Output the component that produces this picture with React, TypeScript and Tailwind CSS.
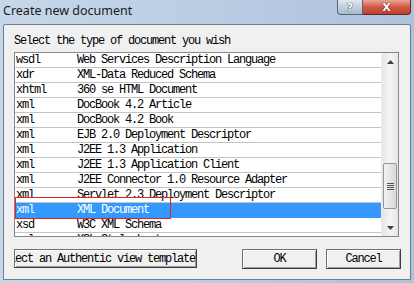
import React from "react";

const rows: [string, string][] = [
  ["wsdl", "Web Services Description Language"],
  ["xdr", "XML-Data Reduced Schema"],
  ["xhtml", "360 se HTML Document"],
  ["xml", "DocBook 4.2 Article"],
  ["xml", "DocBook 4.2 Book"],
  ["xml", "EJB 2.0 Deployment Descriptor"],
  ["xml", "J2EE 1.3 Application"],
  ["xml", "J2EE 1.3 Application Client"],
  ["xml", "J2EE Connector 1.0 Resource Adapter"],
  ["xml", "Servlet 2.3 Deployment Descriptor"],
  ["xml", "XML Document"],
  ["xsd", "W3C XML Schema"],
  ["xsl", "XSL Stylesheet"],
];

const mono = "font-['Liberation_Mono',monospace] text-[12px] tracking-[-1.2px]";

export default function App() {
  return (
    <div className="relative w-[414px] h-[283px] overflow-hidden flex flex-col px-[3px] pb-[3px] bg-gradient-to-r from-[#c6d7ea] to-[#adc3dc]">
      {/* title bar */}
      <div className="h-[24px] flex items-start shrink-0">
        <div className="pt-[2px] font-['Noto_Sans',sans-serif] text-[12.5px] leading-[18px] text-[#1a1a1a]">
          Create new document
        </div>
        <div className="ml-auto flex">
          <div className="w-[26px] h-[15px] border border-t-0 border-[#55657a] rounded-bl-[4px] bg-gradient-to-b from-[#dfe7f0] to-[#a9b9cc] flex items-center justify-center font-['DejaVu_Sans',sans-serif] font-bold text-[11px] leading-none text-white [text-shadow:0_0_1px_#2c3a4a,0_0_1px_#2c3a4a]">
            ?
          </div>
          <div className="w-[48px] h-[15px] border border-t-0 border-l-0 border-[#5a2a24] rounded-br-[4px] bg-gradient-to-b from-[#e9a596] via-[#d15a44] to-[#c1402c] flex items-center justify-center font-['DejaVu_Sans',sans-serif] font-bold text-[11px] leading-none text-white [text-shadow:0_0_1px_#4a1a12,0_0_1px_#4a1a12]">
            X
          </div>
        </div>
      </div>

      {/* content panel */}
      <div className="flex-1 flex flex-col border border-[#6d7d8f] rounded-t-[2px] bg-[#f0f0f0] pl-[10px] pt-[10px]">
        <div className={`${mono} h-[13px] leading-[13px] text-black whitespace-nowrap`}>
          Select the type of document you wish
        </div>

        {/* list */}
        <div className="mt-[4px] w-[385px] h-[185px] border border-[#828790] bg-white flex overflow-hidden">
          <div className="flex-1 flex flex-col overflow-hidden">
            {rows.map(([ext, name], i) => {
              const sel = i === 10;
              return (
                <div
                  key={i}
                  className={`h-[15px] shrink-0 flex border-b ${mono} leading-[14px] whitespace-nowrap ${
                    sel ? "bg-[#3399ff] text-white border-[#3399ff]" : "text-black border-[#c4c4c4]"
                  }`}
                >
                  <div className="w-[62px] pl-[1px] shrink-0">{ext}</div>
                  <div>{name}</div>
                </div>
              );
            })}
          </div>
          {/* scrollbar */}
          <div className="w-[17px] shrink-0 flex flex-col bg-gradient-to-r from-[#e6e6e6] via-[#f4f4f4] to-[#e6e6e6] border-l border-[#ececec]">
            <div className="h-[17px] flex items-center justify-center">
              <svg width="7" height="4" viewBox="0 0 7 4">
                <path d="M0 4 L3.5 0 L7 4 Z" fill="#404040" />
              </svg>
            </div>
            <div className="h-[93px]" />
            <div className="h-[46px] mx-[1px] rounded-[2px] border border-[#979797] bg-gradient-to-r from-[#f2f2f2] to-[#d8d8d8] flex flex-col items-center justify-center gap-[1px]">
              <div className="w-[7px] h-[1px] bg-[#555]" />
              <div className="w-[7px] h-[1px] bg-[#555]" />
              <div className="w-[7px] h-[1px] bg-[#555]" />
              <div className="w-[7px] h-[1px] bg-[#555]" />
            </div>
            <div className="flex-1" />
            <div className="h-[17px] flex items-center justify-center">
              <svg width="7" height="4" viewBox="0 0 7 4">
                <path d="M0 0 L3.5 4 L7 0 Z" fill="#404040" />
              </svg>
            </div>
          </div>
        </div>

        {/* buttons */}
        <div className="mt-[12px] w-[387px] flex items-start">
          <div className="w-[183px] h-[19px] border border-[#707070] border-r-[#3c3c3c] border-b-[#3c3c3c] bg-[#f0f0f0] shadow-[inset_1px_1px_0_#ffffff,inset_-1px_-1px_0_#a0a0a0] overflow-hidden flex justify-end items-center">
            <span className={`${mono} whitespace-nowrap text-black leading-[14px] pr-[1px]`}>
              Select an Authentic view template
            </span>
          </div>
          <div className="ml-auto w-[75px] h-[20px] border border-[#707070] border-r-[#3c3c3c] border-b-[#3c3c3c] bg-[#f0f0f0] shadow-[inset_1px_1px_0_#ffffff,inset_-1px_-1px_0_#a0a0a0] flex items-center justify-center">
            <span className={`${mono} text-black leading-[14px]`}>OK</span>
          </div>
          <div className="ml-[9px] w-[75px] h-[20px] border border-[#707070] border-r-[#3c3c3c] border-b-[#3c3c3c] bg-[#f0f0f0] shadow-[inset_1px_1px_0_#ffffff,inset_-1px_-1px_0_#a0a0a0] flex items-center justify-center">
            <span className={`${mono} text-black leading-[14px]`}>Cancel</span>
          </div>
        </div>
      </div>

      {/* red annotation box */}
      <div className="absolute left-[15px] top-[197px] w-[156px] h-[22px] border border-[#e4231b] pointer-events-none" />
    </div>
  );
}
